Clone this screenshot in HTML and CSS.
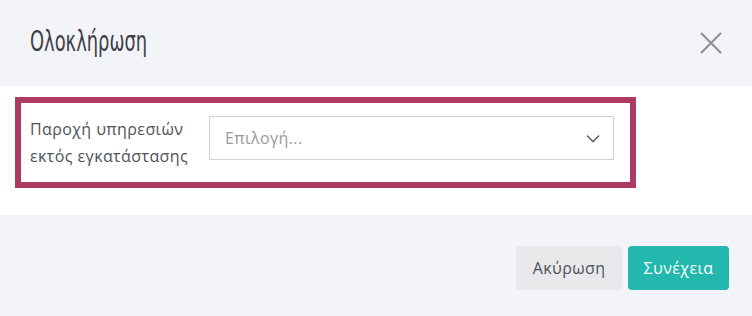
FILE: index.html
```html
<!DOCTYPE html>
<html lang="el">
<head>
    <meta charset="UTF-8">
    <meta name="viewport" content="width=device-width, initial-scale=1.0">
    <title>Ολοκλήρωση</title>
    <link rel="stylesheet" href="styles.css">
</head>
<body>
    <div class="modal">
        <div class="modal-header">
            <h2 class="modal-title">Ολοκλήρωση</h2>
            <button class="modal-close" aria-label="Κλείσιμο">
                <svg width="22" height="22" viewBox="0 0 22 22">
                    <path d="M1 1L21 21M21 1L1 21" stroke="#8c8f95" stroke-width="2" fill="none"/>
                </svg>
            </button>
        </div>
        <div class="modal-body">
            <div class="field-box">
                <label class="field-label">Παροχή υπηρεσιών εκτός εγκατάστασης</label>
                <div class="select">
                    <span class="select-placeholder">Επιλογή...</span>
                    <svg class="select-arrow" width="14" height="9" viewBox="0 0 14 9">
                        <path d="M1 1.5L7 7.5L13 1.5" stroke="#666" stroke-width="1.6" fill="none"/>
                    </svg>
                </div>
            </div>
        </div>
        <div class="modal-footer">
            <button class="btn btn-cancel">Ακύρωση</button>
            <button class="btn btn-primary">Συνέχεια</button>
        </div>
    </div>
</body>
</html>
```

FILE: styles.css
```css
html, body {
    margin: 0;
    padding: 0;
    background: #f3f4f8;
}
.modal {
    width: 752px;
    height: 316px;
    display: flex;
    flex-direction: column;
    font-family: "Open Sans", "Noto Sans", sans-serif;
    letter-spacing: 0.4px;
}
.modal-header {
    height: 86px;
    box-sizing: border-box;
    display: flex;
    align-items: center;
    justify-content: space-between;
    padding: 0 30px 0 30px;
    background: #f3f4f8;
}
.modal-title {
    margin: 0;
    font-family: "DejaVu Sans Condensed", "DejaVu Sans", sans-serif;
    font-stretch: condensed;
    font-weight: normal;
    font-size: 28px;
    letter-spacing: 0;
    color: #3d4147;
    transform: scaleX(0.71);
    transform-origin: left center;
    margin-top: -3px;
}
.modal-close {
    border: none;
    background: none;
    padding: 0;
    margin-top: -1px;
    cursor: pointer;
    display: flex;
}
.modal-body {
    background: #fff;
    height: 129px;
    padding: 11px 0 0 15px;
    box-sizing: border-box;
}
.field-box {
    width: 621px;
    height: 91px;
    box-sizing: border-box;
    border: 6px solid #ad3a62;
    display: flex;
    align-items: flex-start;
    padding: 13px 16px 0 9px;
    gap: 11px;
}
.field-label {
    width: 168px;
    font-size: 16px;
    line-height: 27px;
    color: #4f5258;
}
.select {
    flex: 1;
    height: 44px;
    box-sizing: border-box;
    border: 1px solid #d2d2d2;
    display: flex;
    align-items: center;
    justify-content: space-between;
    padding: 0 13px 0 15px;
}
.select-placeholder {
    font-size: 16px;
    color: #9a9a9a;
}
.modal-footer {
    flex: 1;
    background: #f3f4f8;
    display: flex;
    justify-content: flex-end;
    gap: 6px;
    padding: 31px 23px 0 0;
    box-sizing: border-box;
}
.btn {
    height: 44px;
    border: none;
    border-radius: 4px;
    font-family: "Open Sans", "Noto Sans", sans-serif;
    font-size: 16px;
    letter-spacing: 0.4px;
    padding: 0;
    cursor: pointer;
}
.btn-cancel {
    width: 106px;
    background: #e8e9eb;
    color: #4f5258;
}
.btn-primary {
    width: 101px;
    background: #22b8ad;
    color: #fff;
}
```
